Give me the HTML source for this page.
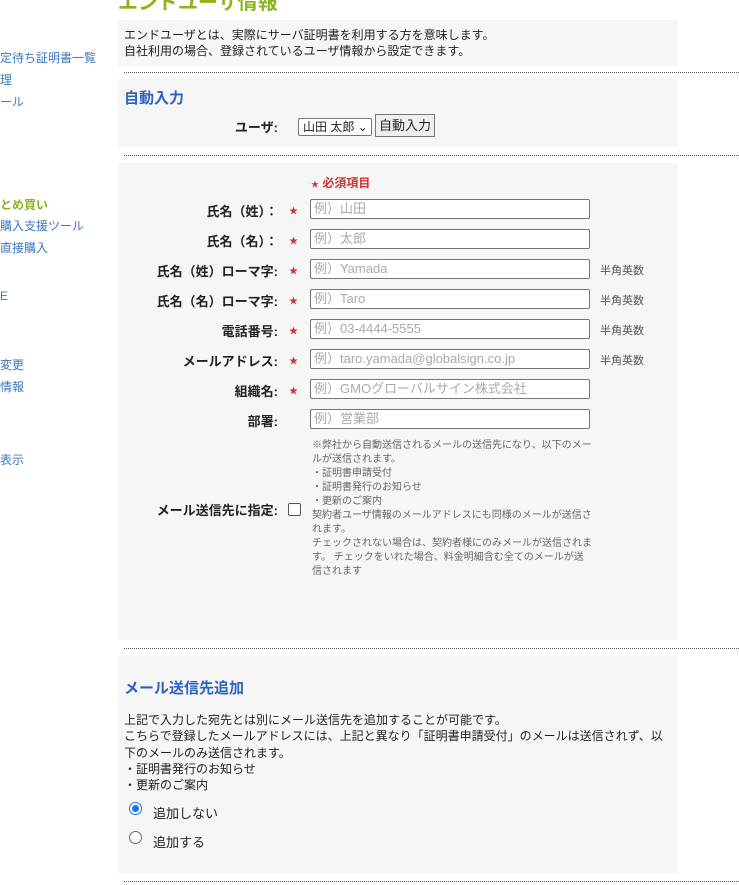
<!DOCTYPE html>
<html><head><meta charset="utf-8"><style>
*{margin:0;padding:0;box-sizing:border-box}
body{width:739px;height:885px;overflow:hidden;background:#fff;font-family:"Liberation Sans","Noto Sans CJK JP",sans-serif;color:#222;position:relative}
.a{position:absolute;white-space:nowrap}
.nav{font-size:12px;color:#3b78c0;left:0}
.panel{position:absolute;left:118px;width:560px;background:#f6f6f6}
.dot{position:absolute;left:124px;right:0;border-top:1px dotted #555;height:0}
.lbl{position:absolute;right:461px;font-size:13px;font-weight:bold;white-space:nowrap}
.req{position:absolute;left:289px;font-size:9px;color:#c33;font-weight:bold}
.inp{position:absolute;left:310px;width:280px;height:20px;border:1px solid #767676;border-radius:2px;background:#fff;font-size:13px;color:#aaa;padding:1px 3px;white-space:nowrap;line-height:16px}
.hint{position:absolute;left:600px;font-size:11px;color:#555}
h2{font-size:15px;color:#2f62c0;font-weight:bold}
</style></head><body>
<div class="a" style="left:118px;top:-14px;font-size:20px;font-weight:bold;color:#8fb31c">エンドユーザ情報</div>

<div class="a nav" style="top:49px">定待ち証明書一覧</div>
<div class="a nav" style="top:71px">理</div>
<div class="a nav" style="top:93px">ール</div>
<div class="a nav" style="top:196px;color:#8fb31c;font-weight:bold">とめ買い</div>
<div class="a nav" style="top:217px">購入支援ツール</div>
<div class="a nav" style="top:239px">直接購入</div>
<div class="a nav" style="top:289px">E</div>
<div class="a nav" style="top:356px">変更</div>
<div class="a nav" style="top:378px">情報</div>
<div class="a nav" style="top:451px">表示</div>

<div class="panel" style="top:20px;height:46px"></div>
<div class="a" style="left:124px;top:27px;font-size:12px;line-height:16px">エンドユーザとは、実際にサーバ証明書を利用する方を意味します。<br>自社利用の場合、登録されているユーザ情報から設定できます。</div>
<div class="dot" style="top:72px"></div>

<div class="panel" style="top:79px;height:68px"></div>
<h2 class="a" style="left:124px;top:87px">自動入力</h2>
<div class="lbl" style="top:117px">ユーザ:</div>
<div class="a" style="left:298px;top:118px;width:74px;height:18px;border:1px solid #767676;border-radius:2px;background:#fff;font-size:12px;padding:1px 4px;line-height:14px">山田 太郎 ⌄</div>
<div class="a" style="left:375px;top:114px;width:60px;height:23px;border:1px solid #767676;background:#efefef;font-size:13px;text-align:center;line-height:21px">自動入力</div>
<div class="dot" style="top:155px"></div>

<div class="panel" style="top:163px;height:477px"></div>
<div class="a" style="left:311px;top:174px;font-size:12px;font-weight:bold;color:#c33"><span style="font-size:8px">★</span> 必須項目</div>

<div class="lbl" style="top:201px">氏名（姓）：</div><div class="req" style="top:204px">★</div><div class="inp" style="top:199px">例）山田</div>
<div class="lbl" style="top:231px">氏名（名）：</div><div class="req" style="top:234px">★</div><div class="inp" style="top:229px">例）太郎</div>
<div class="lbl" style="top:261px">氏名（姓）ローマ字:</div><div class="req" style="top:264px">★</div><div class="inp" style="top:259px">例）Yamada</div><div class="hint" style="top:262px">半角英数</div>
<div class="lbl" style="top:291px">氏名（名）ローマ字:</div><div class="req" style="top:294px">★</div><div class="inp" style="top:289px">例）Taro</div><div class="hint" style="top:292px">半角英数</div>
<div class="lbl" style="top:321px">電話番号:</div><div class="req" style="top:324px">★</div><div class="inp" style="top:319px">例）03-4444-5555</div><div class="hint" style="top:322px">半角英数</div>
<div class="lbl" style="top:351px">メールアドレス:</div><div class="req" style="top:354px">★</div><div class="inp" style="top:349px">例）taro.yamada@globalsign.co.jp</div><div class="hint" style="top:352px">半角英数</div>
<div class="lbl" style="top:381px">組織名:</div><div class="req" style="top:384px">★</div><div class="inp" style="top:379px">例）GMOグローバルサイン株式会社</div>
<div class="lbl" style="top:411px">部署:</div><div class="inp" style="top:409px">例）営業部</div>

<div class="lbl" style="top:500px">メール送信先に指定:</div>
<div class="a" style="left:288px;top:503px;width:13px;height:13px;border:1px solid #555;border-radius:2px;background:#fff"></div>
<div class="a" style="left:312px;top:439px;font-size:10px;line-height:14px;color:#666;white-space:normal;width:280px">※弊社から自動送信されるメールの送信先になり、以下のメールが送信されます。<br>・証明書申請受付<br>・証明書発行のお知らせ<br>・更新のご案内<br>契約者ユーザ情報のメールアドレスにも同様のメールが送信されます。<br>チェックされない場合は、契約者様にのみメールが送信されます。 チェックをいれた場合、料金明細含む全てのメールが送信されます</div>
<div class="dot" style="top:648px"></div>

<div class="panel" style="top:656px;height:217px"></div>
<h2 class="a" style="left:124px;top:677px">メール送信先追加</h2>
<div class="a" style="left:124px;top:712px;font-size:12px;line-height:16.3px">上記で入力した宛先とは別にメール送信先を追加することが可能です。<br>こちらで登録したメールアドレスには、上記と異なり「証明書申請受付」のメールは送信されず、以<br>下のメールのみ送信されます。<br>・証明書発行のお知らせ<br>・更新のご案内</div>
<div class="a" style="left:129px;top:802px;width:13px;height:13px;border-radius:50%;border:1px solid #1a73e8;background:#fff"><div style="position:absolute;left:2px;top:2px;width:7px;height:7px;border-radius:50%;background:#1a73e8"></div></div>
<div class="a" style="left:153px;top:803px;font-size:13px">追加しない</div>
<div class="a" style="left:129px;top:831px;width:13px;height:13px;border-radius:50%;border:1px solid #666;background:#fff"></div>
<div class="a" style="left:153px;top:832px;font-size:13px">追加する</div>
<div class="dot" style="top:881px"></div>
</body></html>
